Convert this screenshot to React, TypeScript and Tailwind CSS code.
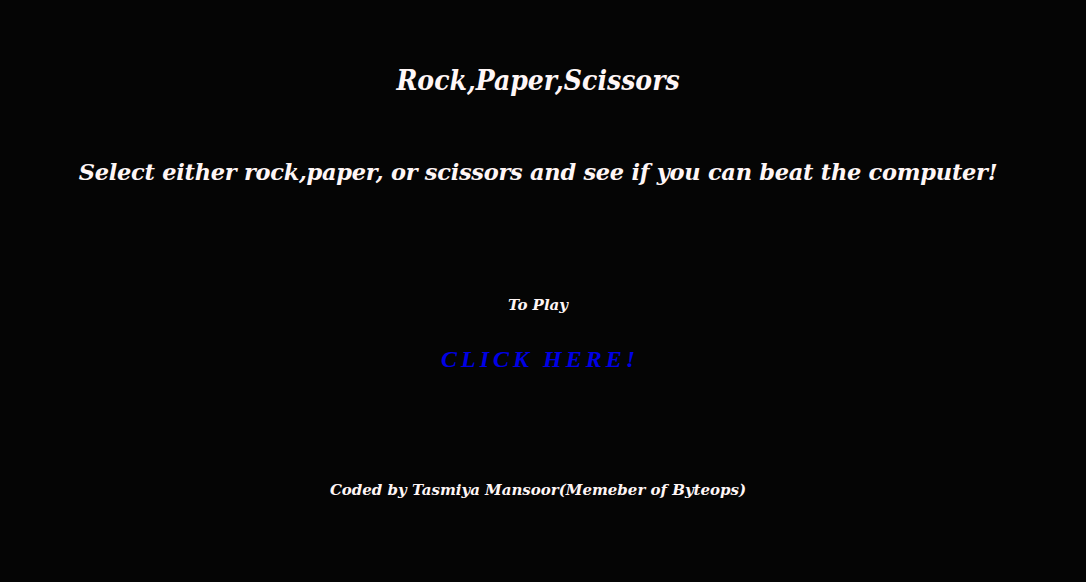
export default function App() {
  return (
    <div className="w-[1086px] h-[582px] bg-[#050505] text-[#fff6f6] flex flex-col items-center overflow-hidden pr-[10px] [font-family:'DejaVu_Serif',serif] italic font-bold">
      <h1 className="mt-[63px] text-[28px] leading-[36px] font-semibold [font-family:'DejaVu_Serif_Condensed','DejaVu_Serif',serif]">Rock,Paper,Scissors</h1>
      <h2 className="mt-[58px] text-[22.5px] leading-[30px] tracking-[-0.27px]">Select either rock,paper, or scissors and see if you can beat the computer!</h2>
      <p className="mt-[108px] text-[15px] leading-[20px]">To Play</p>
      <a className="mt-[29px] text-[24px] leading-[30px] tracking-[4px] text-[#0000e6] [font-family:'Liberation_Serif',serif] pl-[4px]">CLICK HERE!</a>
      <p className="mt-[106px] text-[15px] leading-[20px]">Coded by Tasmiya Mansoor(Memeber of Byteops)</p>
    </div>
  );
}
